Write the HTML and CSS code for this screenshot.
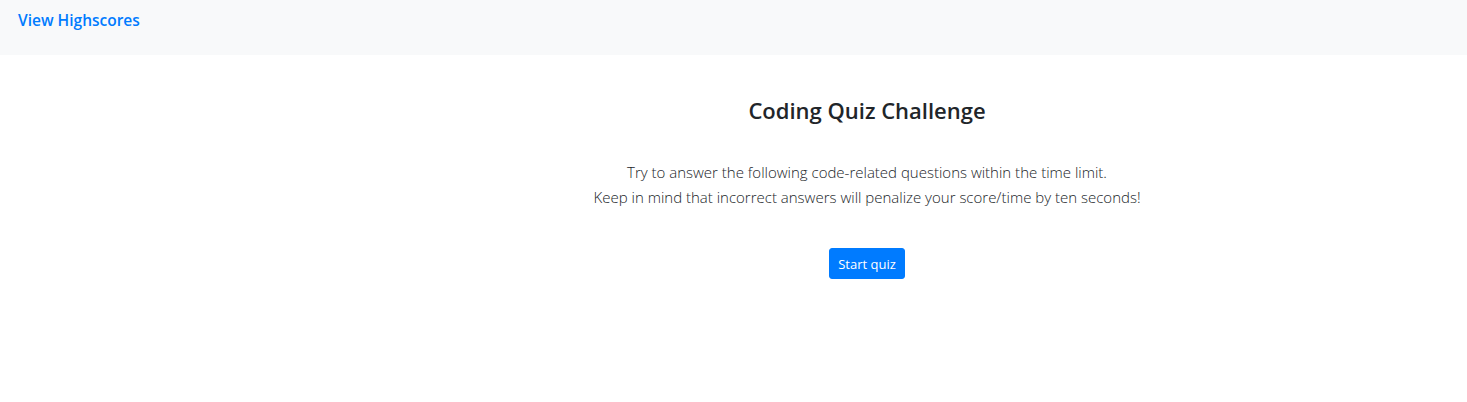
FILE: index.html
```html
<!DOCTYPE html>
<html lang="en">
<head>
<meta charset="utf-8">
<title>Coding Quiz Challenge</title>
<link rel="stylesheet" href="styles.css">
</head>
<body>
<nav class="navbar">
  <a class="nav-link" href="#">View Highscores</a>
</nav>
<main class="main">
  <section class="intro">
    <h1 class="title">Coding Quiz Challenge</h1>
    <p class="lead">Try to answer the following code-related questions within the time limit.<br>Keep in mind that incorrect answers will penalize your score/time by ten seconds!</p>
    <button class="btn" type="button">Start quiz</button>
  </section>
</main>
</body>
</html>
```

FILE: styles.css
```css
html, body {
  margin: 0;
  padding: 0;
  background: #fff;
  font-family: "Open Sans", "Noto Sans", sans-serif;
  color: #212529;
}
.navbar {
  height: 55px;
  background: #f8f9fa;
  display: flex;
  align-items: flex-start;
  padding: 0 18px;
  box-sizing: border-box;
}
.nav-link {
  color: #007bff;
  font-weight: 600;
  font-size: 15.5px;
  text-decoration: none;
  line-height: 20px;
  margin-top: 10px;
}
.main {
  display: flex;
  padding-left: 267px;
}
.intro {
  flex: 1;
  display: flex;
  flex-direction: column;
  align-items: center;
  text-align: center;
}
.title {
  font-size: 22px;
  font-weight: 600;
  margin: 40px 0 0;
  line-height: 30px;
}
.lead {
  font-size: 15px;
  font-weight: 300;
  line-height: 25px;
  margin: 35px 0 0;
  color: #212529;
}
.btn {
  margin-top: 38px;
  background: #007bff;
  color: #fff;
  border: 1px solid #007bff;
  border-radius: 3px;
  font-family: inherit;
  font-size: 13px;
  height: 31px;
  padding: 0 8px;
  cursor: pointer;
}
```
